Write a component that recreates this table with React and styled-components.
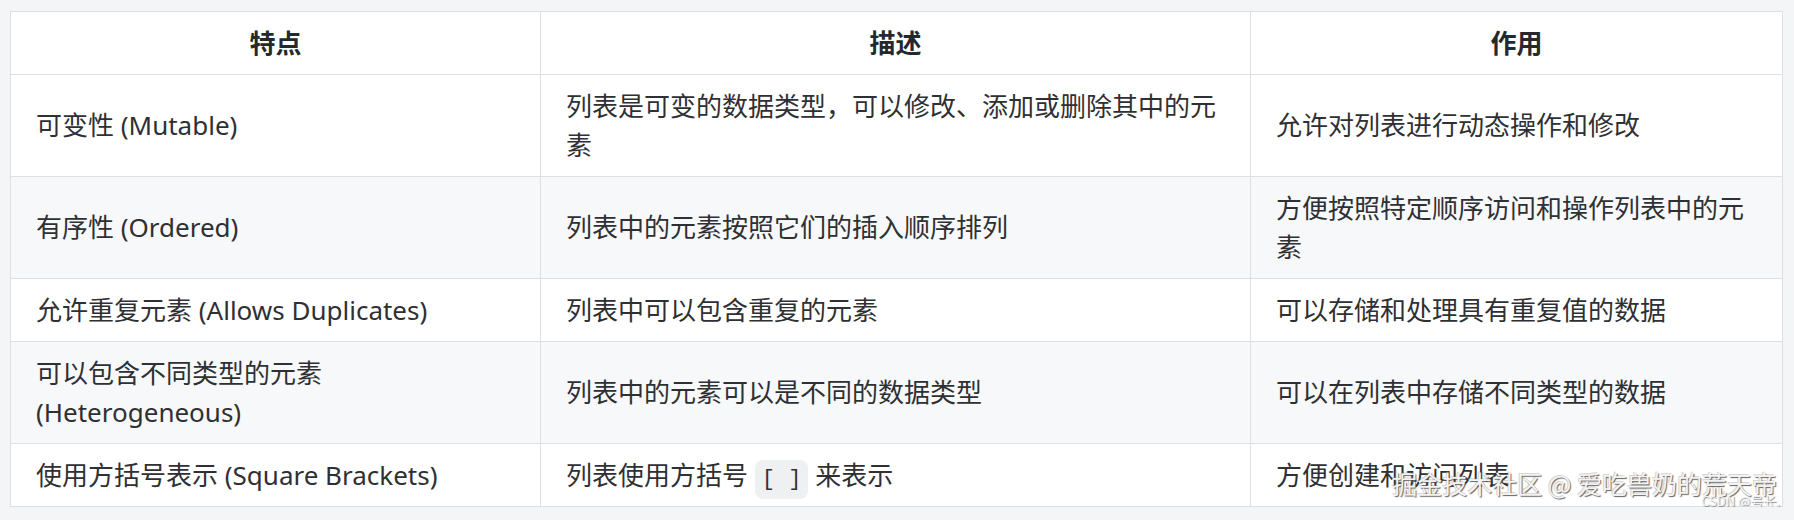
import React from "react";
import styled, { createGlobalStyle } from "styled-components";

const GlobalStyle = createGlobalStyle`
  body {
    margin: 0;
    background: #f4f5f7;
    font-family: "Noto Sans", "Noto Sans CJK SC", sans-serif;
  }
`;

const Page = styled.div`
  position: relative;
  padding: 11px 12px 0 10px;
`;

const Table = styled.table`
  width: 1772px;
  border-collapse: collapse;
  table-layout: fixed;
  font-size: 26px;
  line-height: 39px;
  color: #2f3033;
  background: #fff;
`;

const HeadCell = styled.th`
  padding: 11.5px 25px;
  border: 1px solid #dcdfe4;
  font-weight: 700;
  text-align: center;
  color: #24292e;
`;

const Row = styled.tr`
  background: ${(p) => (p.$striped ? "#f6f8fa" : "#fff")};
`;

const Cell = styled.td`
  padding: 11.5px 25px;
  border: 1px solid #dcdfe4;
  text-align: left;
  vertical-align: middle;
`;

const Code = styled.code`
  font-family: "Liberation Mono", "DejaVu Sans Mono", monospace;
  font-size: 22px;
  line-height: 1;
  padding: 7px 7px;
  border-radius: 8px;
  background: #eff0f2;
  color: #333;
`;

const Watermark = styled.div`
  position: absolute;
  top: 466px;
  right: 17px;
  font-family: "Noto Sans CJK SC", sans-serif;
  font-size: 25px;
  line-height: 34px;
  color: #f3f3f3;
  text-shadow: 1px 1px 1px rgba(70, 70, 70, 0.85), -1px -1px 0 rgba(150, 150, 150, 0.4);
  white-space: nowrap;
`;

const SourceMark = styled.div`
  position: absolute;
  top: 494px;
  right: 14px;
  font-family: "Noto Sans CJK SC", sans-serif;
  font-size: 13px;
  line-height: 14px;
  color: #f3f3f3;
  text-shadow: 1px 1px 1px rgba(90, 90, 90, 0.7);
  white-space: nowrap;
`;

const rows = [
  ["可变性 (Mutable)", "列表是可变的数据类型，可以修改、添加或删除其中的元素", "允许对列表进行动态操作和修改"],
  ["有序性 (Ordered)", "列表中的元素按照它们的插入顺序排列", "方便按照特定顺序访问和操作列表中的元素"],
  ["允许重复元素 (Allows Duplicates)", "列表中可以包含重复的元素", "可以存储和处理具有重复值的数据"],
  ["可以包含不同类型的元素 (Heterogeneous)", "列表中的元素可以是不同的数据类型", "可以在列表中存储不同类型的数据"],
  [
    "使用方括号表示 (Square Brackets)",
    <>
      列表使用方括号 <Code>[ ]</Code> 来表示
    </>,
    "方便创建和访问列表",
  ],
];

const App = () => {
  return (
    <Page>
      <GlobalStyle />
      <Table>
        <colgroup>
          <col style={{ width: 530 }} />
          <col style={{ width: 710 }} />
          <col style={{ width: 532 }} />
        </colgroup>
        <thead>
          <Row>
            <HeadCell>特点</HeadCell>
            <HeadCell>描述</HeadCell>
            <HeadCell>作用</HeadCell>
          </Row>
        </thead>
        <tbody>
          {rows.map((r, i) => (
            <Row key={i} $striped={i % 2 === 1}>
              <Cell>{r[0]}</Cell>
              <Cell>{r[1]}</Cell>
              <Cell>{r[2]}</Cell>
            </Row>
          ))}
        </tbody>
      </Table>
      <Watermark>掘金技术社区 @ 爱吃兽奶的荒天帝</Watermark>
      <SourceMark>CSDN @号长.</SourceMark>
    </Page>
  );
};

export default App;
